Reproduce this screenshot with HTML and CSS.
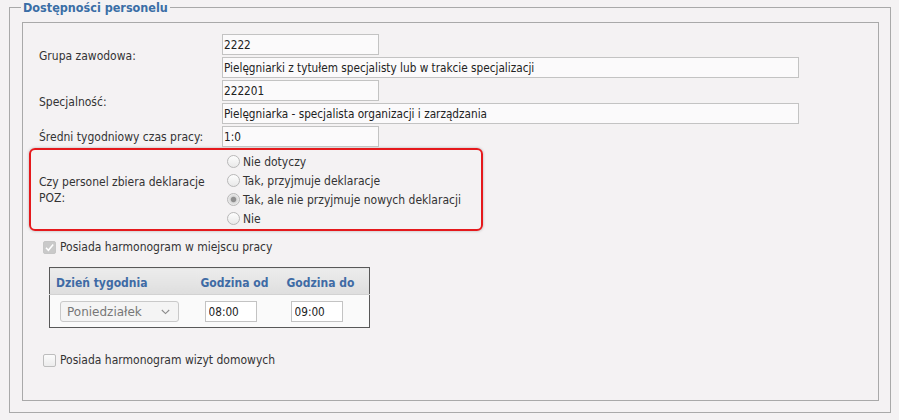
FILE: index.html
```html
<!DOCTYPE html>
<html lang="pl">
<head>
<meta charset="utf-8">
<title>Dostępności personelu</title>
<link rel="stylesheet" href="styles.css">
</head>
<body>
<fieldset class="panel">
  <legend class="panel-title">Dostępności personelu</legend>
  <div class="panel-body">
    <div class="row">
      <div class="label">Grupa zawodowa:</div>
      <div class="fields">
        <input class="inp short" type="text" value="2222">
        <input class="inp long" type="text" value="Pielęgniarki z tytułem specjalisty lub w trakcie specjalizacji">
      </div>
    </div>
    <div class="row">
      <div class="label">Specjalność:</div>
      <div class="fields">
        <input class="inp short" type="text" value="222201">
        <input class="inp long" type="text" value="Pielęgniarka - specjalista organizacji i zarządzania">
      </div>
    </div>
    <div class="row">
      <div class="label">Średni tygodniowy czas pracy:</div>
      <div class="fields">
        <input class="inp short" type="text" value="1:0">
      </div>
    </div>
    <div class="row row-highlight">
      <div class="label">Czy personel zbiera deklaracje POZ:</div>
      <div class="radios">
        <label class="radio"><input type="radio" name="poz"><span>Nie dotyczy</span></label>
        <label class="radio"><input type="radio" name="poz"><span>Tak, przyjmuje deklaracje</span></label>
        <label class="radio"><input type="radio" name="poz" checked><span>Tak, ale nie przyjmuje nowych deklaracji</span></label>
        <label class="radio"><input type="radio" name="poz"><span>Nie</span></label>
      </div>
    </div>
    <div class="check-row check-row-first">
      <span class="checkbox checked"><svg width="11" height="11" viewBox="0 0 11 11"><path d="M2 5.8 L4.4 8.2 L9.2 2.6" fill="none" stroke="#ffffff" stroke-width="1.6"/></svg></span>
      <span>Posiada harmonogram w miejscu pracy</span>
    </div>
    <table class="schedule">
      <colgroup><col class="c1"><col class="c2"><col class="c3"></colgroup>
      <thead>
        <tr><th>Dzień tygodnia</th><th>Godzina od</th><th>Godzina do</th></tr>
      </thead>
      <tbody>
        <tr>
          <td><div class="select"><span>Poniedziałek</span><svg width="9" height="6" viewBox="0 0 9 6"><path d="M0.8 1 L4.5 4.6 L8.2 1" fill="none" stroke="#8a8a8a" stroke-width="1.1"/></svg></div></td>
          <td><input class="inp time" type="text" value="08:00"></td>
          <td><input class="inp time" type="text" value="09:00"></td>
        </tr>
      </tbody>
    </table>
    <div class="check-row check-row-last">
      <span class="checkbox"></span>
      <span>Posiada harmonogram wizyt domowych</span>
    </div>
  </div>
</fieldset>
</body>
</html>
```

FILE: styles.css
```css
html, body {
  margin: 0;
  padding: 0;
}
body {
  background: #f4f2f3;
  font-family: "DejaVu Sans Condensed", "DejaVu Sans", sans-serif;
  font-stretch: condensed;
  font-size: 12px;
  color: #333333;
}
.panel {
  margin: 0 8px 0 9px;
  padding: 0 11px 11px 12px;
  border: 1px solid #a9a9a9;
  min-width: 0;
}
.panel-title {
  margin-left: -1px;
  padding: 0 2px;
  line-height: 15px;
  font-size: 12.5px;
  font-weight: bold;
  color: #3a6ea6;
}
.panel-body {
  margin-top: 7px;
  border: 1px solid #a9a9a9;
  padding: 11px 0 32px 6px;
}
.row {
  display: flex;
  align-items: center;
  padding-left: 10px;
  margin-top: 2px;
}
.row:first-child {
  margin-top: 0;
}
.label {
  flex: 0 0 183px;
  box-sizing: border-box;
  padding-right: 8px;
  line-height: 16px;
}
.fields {
  display: flex;
  flex-direction: column;
  gap: 2px;
}
.inp {
  box-sizing: border-box;
  height: 21px;
  margin: 0;
  border: 1px solid #c3c3c3;
  border-radius: 0;
  background: #fbfafb;
  padding: 0 2px 0 1px;
  font: inherit;
  font-size: 11.7px;
  color: #222222;
  outline: none;
}
.short { width: 157px; }
.long { width: 577px; }
.row-highlight {
  box-sizing: border-box;
  width: 454px;
  margin-top: 1px;
  padding: 2px 0 1px 8px;
  border: 2px solid #e5191c;
  border-radius: 6px;
  box-shadow: 0 0 3px rgba(0, 0, 0, 0.28);
}
.radios {
  display: flex;
  flex-direction: column;
}
.radio {
  display: flex;
  align-items: center;
  height: 19px;
}
.radio input {
  -webkit-appearance: none;
  appearance: none;
  box-sizing: border-box;
  width: 13px;
  height: 13px;
  margin: 0 3px 0 5px;
  border: 1px solid #b8b8b8;
  border-radius: 50%;
  background: linear-gradient(#fdfdfd, #e9e9e9);
}
.radio input:checked {
  background: radial-gradient(circle, #8f8f8f 0, #8f8f8f 2.2px, #d6d6d6 3.2px, #f2f2f2 6px);
}
.check-row {
  display: flex;
  align-items: center;
  height: 16px;
  padding-left: 14px;
}
.check-row-first { margin-top: 8px; }
.check-row-last { margin-top: 24px; }
.checkbox {
  box-sizing: border-box;
  display: flex;
  align-items: center;
  justify-content: center;
  width: 13px;
  height: 13px;
  margin-right: 4px;
  border: 1px solid #bdbdbd;
  border-radius: 2px;
  background: linear-gradient(#fbfbfb, #ececec);
}
.checkbox.checked {
  border-color: #c6c6c6;
  background: #c9c9c9;
}
.schedule {
  margin: 12px 0 0 20px;
  border-collapse: collapse;
  table-layout: fixed;
  width: 320px;
  border: 1px solid #585858;
}
.c1 { width: 145px; }
.c2 { width: 86px; }
.c3 { width: 89px; }
.schedule th {
  height: 27px;
  box-sizing: border-box;
  padding: 3px 0 0 6px;
  text-align: left;
  font-weight: bold;
  color: #3f6ba5;
  background: linear-gradient(#ececec, #dedede);
  border-bottom: 1px solid #d2d2d2;
}
.schedule td {
  padding: 6px 0 5px 10px;
  background: #fafafa;
}
.select {
  box-sizing: border-box;
  display: flex;
  align-items: center;
  justify-content: space-between;
  width: 119px;
  height: 21px;
  padding: 0 8px 0 6px;
  border: 1px solid #c9c9c9;
  border-radius: 3px;
  background: #f4f4f4;
  color: #777777;
  font-family: "DejaVu Sans", sans-serif;
  font-stretch: normal;
}
.time {
  width: 52px;
  padding: 0 2px 0 3px;
  background: #ffffff;
}
```
